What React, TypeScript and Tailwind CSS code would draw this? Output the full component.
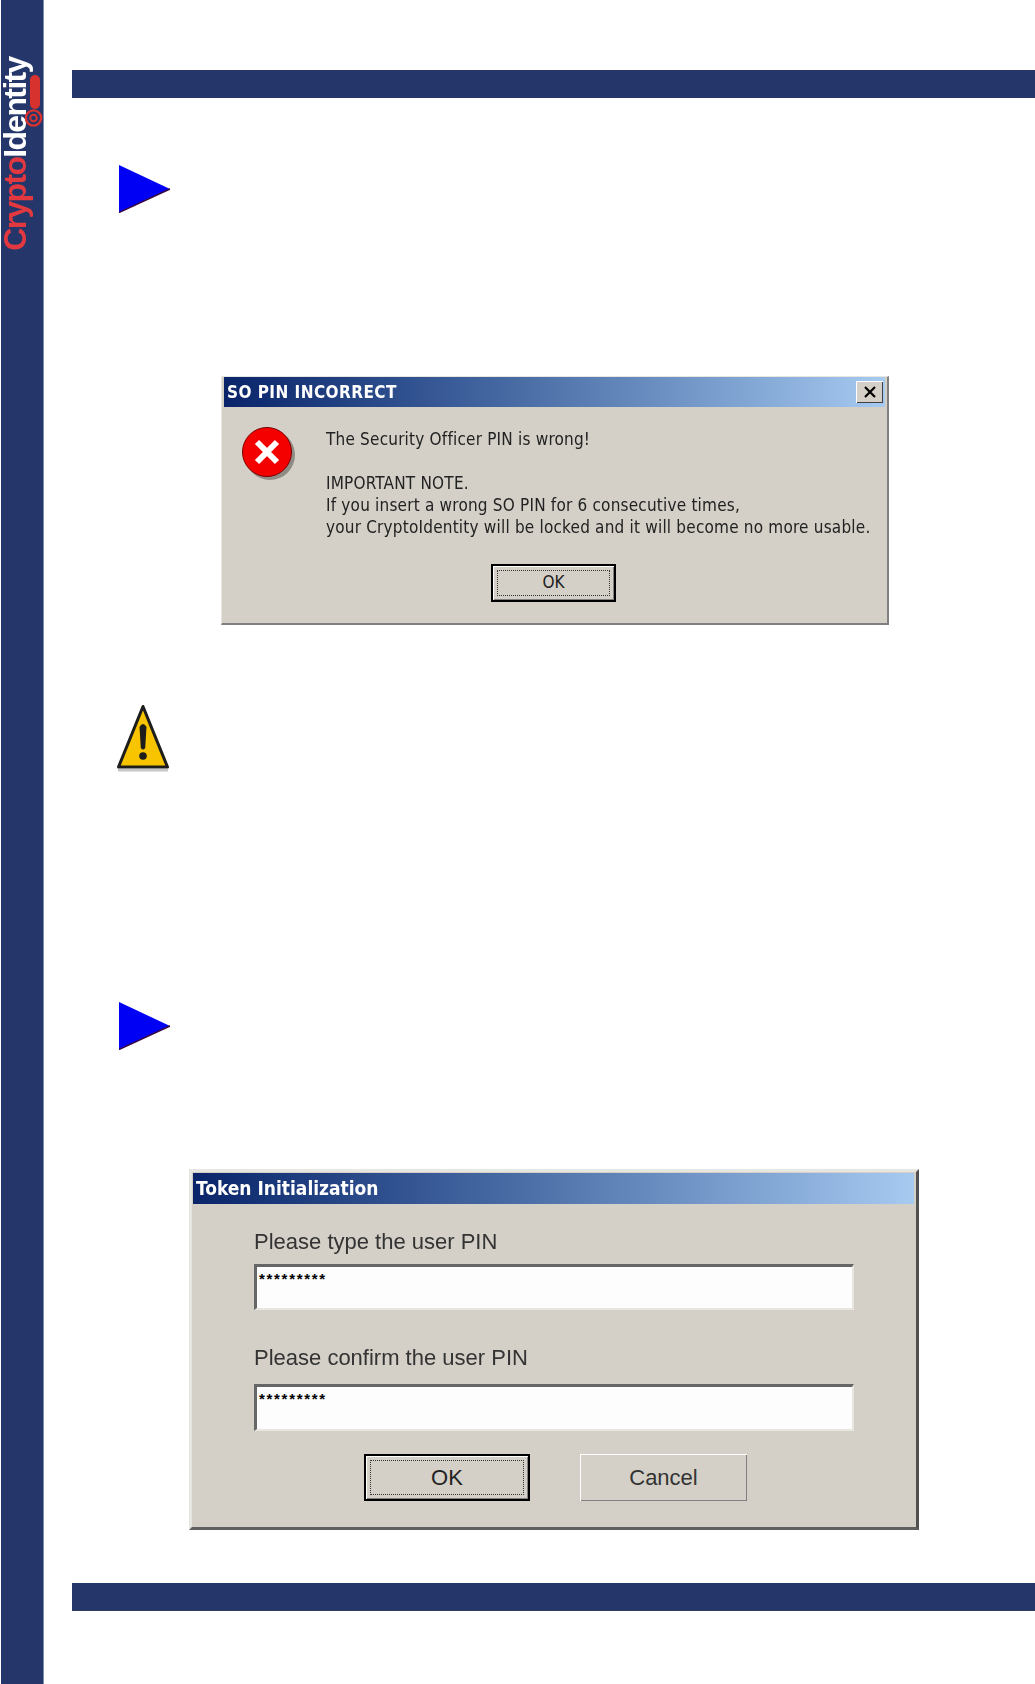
import React from "react";

const tahoma = "font-['DejaVu_Sans_Condensed','DejaVu_Sans',sans-serif]";
const arial = "font-['Liberation_Sans',Arial,sans-serif]";
const raised = "shadow-[inset_1px_1px_0_#ffffff,inset_-1px_-1px_0_#808080]";

function Arrow({ className }: { className: string }) {
  return (
    <svg className={className} width="52" height="48" viewBox="0 0 52 48">
      <polygon points="0,0 51,24 0,48" fill="#0000f4" />
      <polyline points="0,47.5 51,24" fill="none" stroke="#3a0a40" strokeWidth="1.4" />
    </svg>
  );
}

function Warning({ className }: { className: string }) {
  return (
    <svg className={className} width="54" height="68" viewBox="0 0 54 68">
      <polygon points="27,2.5 51.5,63 2.5,63" fill="#f8c400" stroke="#1d1d1b" strokeWidth="3" strokeLinejoin="round" />
      <rect x="2" y="65" width="50" height="2.5" fill="#c8c8c8" />
      <path d="M23.5 23 Q27 17 30.5 23 L29.2 44 Q27 47 24.8 44 Z" fill="#1d1d1b" />
      <circle cx="27" cy="52" r="3.8" fill="#1d1d1b" />
    </svg>
  );
}

function ErrorIcon({ className }: { className: string }) {
  return (
    <svg className={className} width="54" height="54" viewBox="0 0 54 54">
      <circle cx="28" cy="28" r="25" fill="#8f8c86" />
      <circle cx="25" cy="25" r="24.5" fill="#f40000" stroke="#7a0000" strokeWidth="1" />
      <path d="M15 15 L35 35 M35 15 L15 35" stroke="#ffffff" strokeWidth="6" fill="none" />
    </svg>
  );
}

function Logo() {
  return (
    <div className="relative h-[193px] w-full mt-[57px]">
      <div className={`absolute left-[-2px] top-0 flex items-center justify-center rotate-180 [writing-mode:vertical-rl] ${arial} font-bold text-[32px] leading-[32px] tracking-[-1.65px] whitespace-nowrap`}>
        <span className="text-[#e2383f]">Crypto</span>
        <span className="text-white">Identity</span>
      </div>
      <svg className="absolute left-[24px] top-[18px]" width="18" height="54" viewBox="0 0 18 54">
        <rect x="5" y="0" width="10" height="34" rx="5" fill="#d8322f" />
        <circle cx="8.5" cy="43" r="7.6" fill="none" stroke="#d8322f" strokeWidth="2.4" />
        <circle cx="8.5" cy="43" r="3.3" fill="none" stroke="#d8322f" strokeWidth="2" />
      </svg>
    </div>
  );
}

function FocusButton({ className, label, text }: { className: string; label: string; text: string }) {
  return (
    <div className={`border-2 border-black bg-[#d4d0c8] ${className}`}>
      <div className={`w-full h-full p-[4px] ${raised}`}>
        <div className={`w-full h-full border border-dotted border-[#333] flex items-center justify-center text-[#222] ${text}`}>{label}</div>
      </div>
    </div>
  );
}

function PinInput({ height }: { height: string }) {
  return (
    <div className={`${height} bg-[#fdfdfd] border-t-[3px] border-l-[3px] border-r-2 border-b-2 border-t-[#666] border-l-[#666] border-r-[#e8e6e0] border-b-[#e8e6e0] pl-[2px]`}>
      <div className={`${arial} font-bold text-[15px] leading-[24px] tracking-[1.7px] text-black`}>*********</div>
    </div>
  );
}

export default function App() {
  return (
    <div className="flex w-[1035px] h-[1684px] bg-white overflow-hidden">
      <aside className="w-[43px] shrink-0 ml-[1px] bg-[#25376a] border-r border-r-[#7f8db0]">
        <Logo />
      </aside>

      <main className="flex-1 ml-[28px] pt-[70px] flex flex-col">
        <div className="h-[28px] bg-[#25376a]" />

        <Arrow className="ml-[47px] mt-[67px]" />

        <section className={`ml-[149px] mt-[163px] w-[668px] h-[249px] bg-[#d4d0c8] border-r-2 border-b-2 border-r-[#808080] border-b-[#808080] border-t border-l border-t-[#e8e6e0] border-l-[#e8e6e0] px-[2px] ${tahoma}`}>
          <header className="h-[30px] flex items-center justify-between bg-gradient-to-r from-[#0a246a] to-[#a6caf0] pl-[3px] pr-[2px]">
            <span className="text-white font-bold text-[17px] tracking-[0.45px] mt-[2px] blur-[0.3px]">SO PIN INCORRECT</span>
            <div className="w-[27px] h-[22px] bg-[#d4d0c8] flex items-center justify-center shadow-[inset_1px_1px_0_#ffffff,inset_-1px_-1px_0_#404040]">
              <svg width="14" height="12" viewBox="0 0 14 12">
                <path d="M2 1 L12 11 M12 1 L2 11" stroke="#000" strokeWidth="2.2" fill="none" />
              </svg>
            </div>
          </header>
          <div className="flex">
            <ErrorIcon className="ml-[18px] mt-[20px] shrink-0" />
            <div className="ml-[30px] mt-[21px] text-[17px] leading-[22px] tracking-[0.2px] text-[#222] whitespace-nowrap blur-[0.3px]">
              <p>The Security Officer PIN is wrong!</p>
              <p>&nbsp;</p>
              <p>IMPORTANT NOTE.</p>
              <p>If you insert a wrong SO PIN for 6 consecutive times,</p>
              <p>your CryptoIdentity will be locked and it will become no more usable.</p>
            </div>
          </div>
          <FocusButton className="ml-[267px] mt-[26px] w-[125px] h-[38px]" label="OK" text="text-[17px]" />
        </section>

        <Warning className="ml-[44px] mt-[79px]" />

        <Arrow className="ml-[47px] mt-[230px]" />

        <section className={`ml-[117px] mt-[119px] w-[730px] h-[361px] bg-[#d4d0c8] border-t-[3px] border-l-[3px] border-t-[#e8e6e0] border-l-[#e8e6e0] border-r-[3px] border-b-[3px] border-r-[#505050] border-b-[#606060] pl-[1px] pr-[2px] pt-[1px]`}>
          <header className={`h-[31px] flex items-center bg-gradient-to-r from-[#0a246a] to-[#a6caf0] pl-[3px] ${tahoma}`}>
            <span className="text-white font-bold text-[19px] blur-[0.3px]">Token Initialization</span>
          </header>
          <div className={`pl-[61px] ${arial} text-[#333]`}>
            <div className="w-[600px]">
              <p className="text-[22px] leading-[26px] mt-[25px] blur-[0.3px]">Please type the user PIN</p>
              <div className="mt-[9px]"><PinInput height="h-[46px]" /></div>
              <p className="text-[22px] leading-[26px] mt-[35px] blur-[0.3px]">Please confirm the user PIN</p>
              <div className="mt-[13px]"><PinInput height="h-[47px]" /></div>
            </div>
            <div className="flex mt-[23px] ml-[110px] gap-[50px]">
              <FocusButton className="w-[166px] h-[47px]" label="OK" text="text-[22px]" />
              <div className={`w-[167px] h-[47px] flex items-center justify-center text-[22px] text-[#333] ${raised}`}>Cancel</div>
            </div>
          </div>
        </section>

        <div className="h-[28px] mt-[53px] bg-[#25376a] border-b border-b-[#2a3f5f]" />
      </main>
    </div>
  );
}
